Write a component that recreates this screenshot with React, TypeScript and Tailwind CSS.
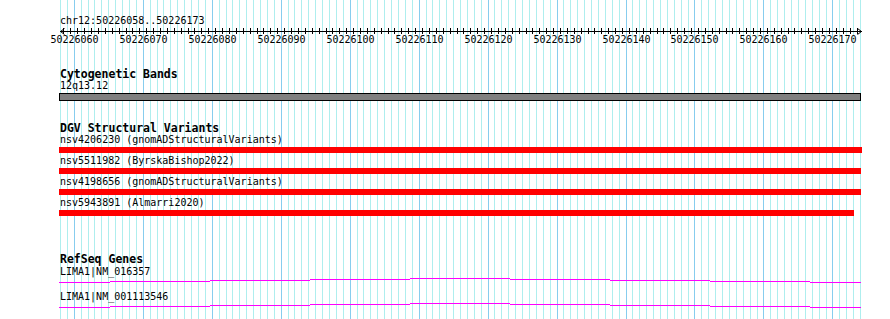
const START = 50226058;
const BASES = 116;
const TRACK_W = 800;
const PX = TRACK_W / BASES;

const mono = "font-['DejaVu_Sans_Mono','Liberation_Mono',monospace]";

const variants = [
  { label: "nsv4206230 (gnomADStructuralVariants)", width: 803 },
  { label: "nsv5511982 (ByrskaBishop2022)", width: 802 },
  { label: "nsv4198656 (gnomADStructuralVariants)", width: 802 },
  { label: "nsv5943891 (Almarri2020)", width: 795 },
];

const genes = ["LIMA1|NM_016357", "LIMA1|NM_001113546"];

function GridLines() {
  const lines = [];
  for (let i = 0; i <= BASES; i++) {
    const x = Math.round(60 + i * PX);
    const major = (START + i) % 10 === 0;
    lines.push(<rect key={i} x={x} y={0} width={1} height={319} fill={major ? "#87cdee" : "#aeeeee"} />);
  }
  return (
    <svg className="absolute inset-0" width={890} height={319} shapeRendering="crispEdges">
      {lines}
    </svg>
  );
}

function Ruler() {
  const ticks = [];
  for (let i = 0; i < BASES; i++) {
    const x = Math.round((i + 0.5) * PX) + 0.5;
    ticks.push(<line key={i} x1={x} x2={x} y1={2} y2={8} stroke="#000" />);
  }
  const labels = [];
  for (let b = START; b < START + BASES; b++) {
    if (b % 10 !== 0) continue;
    const x = Math.round((b - START) * PX);
    labels.push(
      <span
        key={b}
        className="absolute top-[9px] -translate-x-1/2 text-[10px] leading-[10px] text-black"
        style={{ left: x + 0.5 }}
      >
        {b}
      </span>,
    );
  }
  return (
    <div className="relative h-[20px] w-[802px]">
      <svg className="absolute left-0 top-0" width={803} height={10} shapeRendering="crispEdges">
        <line x1={0} x2={802} y1={5.5} y2={5.5} stroke="#000" />
        {ticks}
        <polyline points="4.5,2.5 0.5,5.5 4.5,8.5" fill="none" stroke="#000" shapeRendering="auto" />
        <polyline points="797.5,2.5 801.5,5.5 797.5,8.5" fill="none" stroke="#000" shapeRendering="auto" />
      </svg>
      {labels}
    </div>
  );
}

function TrackTitle({ children }: { children: string }) {
  return <div className="h-[12px] text-[11.5px] font-bold leading-[12px] text-black">{children}</div>;
}

function GeneLine() {
  const edges = [0, 51, 151, 251, 351, 451, 551, 651, 751, 802];
  const ys = [4, 3, 2, 1, 0, 1, 2, 3, 4];
  return (
    <svg className="-ml-[1px] block" width={802} height={5} shapeRendering="crispEdges">
      {ys.map((y, i) => (
        <rect key={i} x={edges[i]} y={y} width={edges[i + 1] - edges[i]} height={1} fill="#ff00ff" />
      ))}
    </svg>
  );
}

export default function App() {
  return (
    <div className={`relative h-[319px] w-[890px] overflow-hidden bg-white ${mono}`}>
      <GridLines />
      <div className="relative flex flex-col pl-[60px] text-black">
        <div className="mt-[16px] h-[10px] text-[10px] leading-[10px]">chr12:50226058..50226173</div>
        <Ruler />

        <div className="mt-[22px]">
          <TrackTitle>Cytogenetic Bands</TrackTitle>
        </div>
        <div className="mt-[1px] h-[10px] text-[10px] leading-[10px]">12q13.12</div>
        <div className="-ml-[1px] mt-[2px] h-[8px] w-[802px] border border-black bg-[#808080]" />

        <div className="mt-[21px]">
          <TrackTitle>DGV Structural Variants</TrackTitle>
        </div>
        {variants.map((v, i) => (
          <div key={v.label} className={i === 0 ? "mt-[1px]" : "mt-[3px]"}>
            <div className="h-[10px] text-[10px] leading-[10px]">{v.label}</div>
            <div className="-ml-[1px] mt-[2px] h-[6px] bg-[#ff0000]" style={{ width: v.width }} />
          </div>
        ))}

        <div className="mt-[37px]">
          <TrackTitle>RefSeq Genes</TrackTitle>
        </div>
        {genes.map((g, i) => (
          <div key={g} className={i === 0 ? "mt-[2px]" : "mt-[9px]"}>
            <div className="h-[10px] text-[10px] leading-[10px]">{g}</div>
            <div className="mt-[1px]">
              <GeneLine />
            </div>
          </div>
        ))}
      </div>
    </div>
  );
}
